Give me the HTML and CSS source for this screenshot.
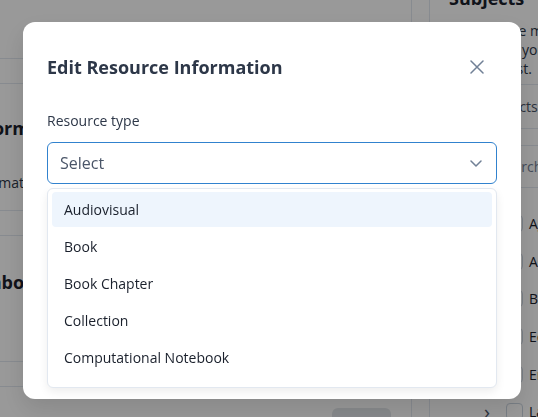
FILE: index.html
```html
<!DOCTYPE html>
<html lang="en">
<head>
<meta charset="utf-8">
<title>Edit Resource Information</title>
<link rel="stylesheet" href="styles.css">
</head>
<body>
<div class="page">
  <main class="main">
    <div class="band band-top"></div>
    <div class="band band-thin"></div>
    <section class="sec">
      <h2 class="sec-title sec-title-first">Resource Information</h2>
      <p class="sec-text">Provide the information about this resource.</p>
    </section>
    <div class="band band-thin"></div>
    <section class="sec sec-2">
      <h2 class="sec-title">Invited Collaborators</h2>
    </section>
    <div class="band band-thin"></div>
    <div class="actions"><button class="btn" type="button">Save</button></div>
  </main>
  <div class="gutter"></div>
  <aside class="sidebar">
    <h3 class="sb-title">Subjects</h3>
    <p class="sb-text">
      <span class="sb-line">Choose one main subject</span>
      <span class="sb-line">subject for your resource</span>
      <span class="sb-line">from the list.</span>
    </p>
    <div class="sb-row">Your subjects</div>
    <div class="sb-band"></div>
    <div class="sb-search">Search subjects</div>
    <ul class="tree">
      <li class="tree-item"><span class="tree-chev">&#8250;</span><span class="cbox"></span><span class="tree-label">Agriculture</span></li>
      <li class="tree-item"><span class="tree-chev">&#8250;</span><span class="cbox"></span><span class="tree-label">Arts</span></li>
      <li class="tree-item"><span class="tree-chev">&#8250;</span><span class="cbox"></span><span class="tree-label">Biology</span></li>
      <li class="tree-item"><span class="tree-chev">&#8250;</span><span class="cbox"></span><span class="tree-label">Economics</span></li>
      <li class="tree-item"><span class="tree-chev">&#8250;</span><span class="cbox"></span><span class="tree-label">Engineering</span></li>
      <li class="tree-item"><span class="tree-chev">&#8250;</span><span class="cbox"></span><span class="tree-label">Law</span></li>
    </ul>
  </aside>
</div>

<div class="overlay"></div>

<div class="modal" role="dialog" aria-labelledby="modal-title">
  <div class="modal-header">
    <h2 class="modal-title" id="modal-title">Edit Resource Information</h2>
    <button class="close-btn" type="button" aria-label="Close">
      <svg width="14" height="14" viewBox="0 0 14 14"><path d="M1 1 L13 13 M13 1 L1 13" stroke="#718096" stroke-width="1.5" fill="none" stroke-linecap="round"/></svg>
    </button>
  </div>
  <div class="field-label">Resource type</div>
  <div class="select">
    <span class="select-value">Select</span>
    <svg class="select-chev" width="12" height="7" viewBox="0 0 12 7"><path d="M1 1 L6 6 L11 1" stroke="#718096" stroke-width="1.5" fill="none" stroke-linecap="round" stroke-linejoin="round"/></svg>
  </div>
  <ul class="dropdown">
    <li class="option option-active">Audiovisual</li>
    <li class="option">Book</li>
    <li class="option">Book Chapter</li>
    <li class="option">Collection</li>
    <li class="option">Computational Notebook</li>
  </ul>
</div>
</body>
</html>
```

FILE: styles.css
```css
html, body {
  margin: 0;
  padding: 0;
}
body {
  font-family: "Open Sans", "Noto Sans", sans-serif;
  background: #ffffff;
  color: #1a202c;
  overflow: hidden;
  width: 538px;
  height: 417px;
}

/* ---------- background page ---------- */
.page {
  display: flex;
  height: 417px;
  overflow: hidden;
}
.main {
  flex: none;
  width: 547px;
  margin-left: -135px;
  border-right: 1px solid #e2e8f0;
  box-sizing: border-box;
}
.band {
  border-bottom: 1px solid #e2e8f0;
}
.band-top { height: 58px; }
.band-thin { height: 24px; }
.sec {
  height: 127px;
  box-sizing: border-box;
  padding: 30px 0 0 24px;
  border-bottom: 1px solid #e2e8f0;
}
.sec-2 {
  height: 126px;
  padding-top: 32px;
}
.sec-title {
  margin: 0;
  font-size: 18px;
  line-height: 28px;
  font-weight: 700;
  color: #1a202c;
  white-space: nowrap;
}
.sec-title-first {
  margin-left: -8px;
}
.sec-text {
  margin: 30px 0 0;
  font-size: 14px;
  line-height: 21px;
  color: #2d3748;
  white-space: nowrap;
}
.actions {
  display: flex;
  justify-content: flex-end;
  padding: 21px 20px 0 0;
}
.btn {
  width: 59px;
  height: 36px;
  border: none;
  border-radius: 6px;
  background: #e2e6ea;
  font-family: inherit;
  font-size: 14px;
  color: #2d3748;
}
.gutter {
  flex: none;
  width: 17px;
}
.sidebar {
  flex: 1;
  border-left: 1px solid #e2e8f0;
  padding-left: 19px;
  min-width: 0;
  white-space: nowrap;
}
.sb-title {
  margin: -16px 0 0;
  font-size: 18px;
  line-height: 28px;
  font-weight: 700;
  color: #1a202c;
}
.sb-text {
  margin: 9px 0 6px;
  font-size: 14px;
  line-height: 19px;
  color: #2d3748;
}
.sb-line { display: block; }
.sb-row {
  margin-left: -19px;
  padding-left: 20px;
  height: 43px;
  line-height: 43px;
  font-size: 14px;
  color: #4a5568;
  border-top: 1px solid #e2e8f0;
  border-bottom: 1px solid #e2e8f0;
}
.sb-band {
  margin-left: -19px;
  height: 16px;
  border-bottom: 1px solid #e2e8f0;
}
.sb-search {
  margin-left: -19px;
  padding-left: 68px;
  height: 41px;
  line-height: 41px;
  font-size: 14px;
  color: #718096;
  border-bottom: 1px solid #e2e8f0;
}
.tree {
  list-style: none;
  margin: 0;
  padding: 17px 0 0 30px;
}
.tree-item {
  display: flex;
  align-items: center;
  height: 37.6px;
  font-size: 14px;
  color: #1a202c;
}
.tree-chev {
  flex: none;
  width: 16px;
  margin-right: 11px;
  font-size: 20px;
  line-height: 1;
  color: #4a5568;
  text-align: center;
}
.cbox {
  flex: none;
  width: 17px;
  height: 17px;
  box-sizing: border-box;
  border: 1px solid #cbd5e0;
  border-radius: 4px;
  margin-right: 6px;
  background: #fff;
}
.tree-label {
  flex: none;
}

/* ---------- overlay + modal ---------- */
.overlay {
  position: fixed;
  inset: 0;
  background: rgba(0, 0, 0, 0.4);
}
.modal {
  position: fixed;
  left: 23px;
  top: 22px;
  width: 498px;
  box-sizing: border-box;
  padding: 31px 24px 11px;
  background: #ffffff;
  border-radius: 12px;
  box-shadow: 0 10px 25px rgba(0, 0, 0, 0.12);
}
.modal-header {
  display: flex;
  align-items: center;
  justify-content: space-between;
  height: 28px;
}
.modal-title {
  margin: 0;
  font-size: 18px;
  line-height: 28px;
  font-weight: 700;
  color: #2d3748;
}
.close-btn {
  width: 24px;
  height: 24px;
  padding: 0;
  margin-right: 8px;
  border: none;
  background: transparent;
  display: flex;
  align-items: center;
  justify-content: center;
}
.field-label {
  margin-top: 29px;
  font-size: 14px;
  line-height: 21px;
  color: #2d3748;
}
.select {
  margin-top: 11px;
  height: 42px;
  box-sizing: border-box;
  border: 1px solid #3182ce;
  border-radius: 6px;
  padding: 0 14px 0 12px;
  display: flex;
  align-items: center;
  justify-content: space-between;
}
.select-value {
  font-size: 16px;
  line-height: 24px;
  color: #4a5568;
}
.dropdown {
  list-style: none;
  margin: 4px 0 0;
  height: 200px;
  box-sizing: border-box;
  padding: 3px 4px;
  border: 1px solid #e2e8f0;
  border-radius: 6px;
  box-shadow: 0 4px 10px rgba(0, 0, 0, 0.07);
  background: #ffffff;
}
.option {
  height: 35px;
  margin-bottom: 2px;
  padding-left: 12px;
  display: flex;
  align-items: center;
  border-radius: 4px;
  font-size: 14px;
  color: #1a202c;
}
.option-active {
  background: #eef5fd;
}
```
